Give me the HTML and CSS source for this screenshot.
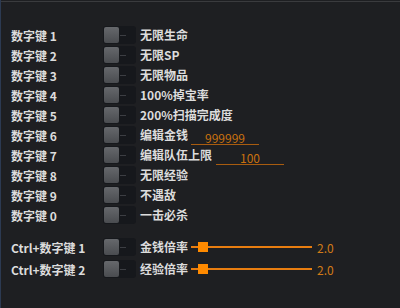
FILE: index.html
```html
<!DOCTYPE html>
<html lang="zh">
<head>
    <meta charset="UTF-8">
    <title>修改器</title>
    <link rel="stylesheet" href="styles.css">
</head>
<body>
    <div class="panel">
        <div class="row"><span class="key">数字键 1</span><span class="toggle"><i></i></span><span class="name">无限生命</span></div>
        <div class="row"><span class="key">数字键 2</span><span class="toggle"><i></i></span><span class="name">无限SP</span></div>
        <div class="row"><span class="key">数字键 3</span><span class="toggle"><i></i></span><span class="name">无限物品</span></div>
        <div class="row"><span class="key">数字键 4</span><span class="toggle"><i></i></span><span class="name">100%掉宝率</span></div>
        <div class="row"><span class="key">数字键 5</span><span class="toggle"><i></i></span><span class="name">200%扫描完成度</span></div>
        <div class="row"><span class="key">数字键 6</span><span class="toggle"><i></i></span><span class="name">编辑金钱</span><span class="field f-money">999999</span></div>
        <div class="row"><span class="key">数字键 7</span><span class="toggle"><i></i></span><span class="name">编辑队伍上限</span><span class="field f-party">100</span></div>
        <div class="row"><span class="key">数字键 8</span><span class="toggle"><i></i></span><span class="name">无限经验</span></div>
        <div class="row"><span class="key">数字键 9</span><span class="toggle"><i></i></span><span class="name">不遇敌</span></div>
        <div class="row"><span class="key">数字键 0</span><span class="toggle"><i></i></span><span class="name">一击必杀</span></div>

        <div class="group">
            <div class="row"><span class="key">Ctrl+数字键 1</span><span class="toggle"><i></i></span><span class="name">金钱倍率</span><span class="slider"><b></b></span><span class="value">2.0</span></div>
            <div class="row"><span class="key">Ctrl+数字键 2</span><span class="toggle"><i></i></span><span class="name">经验倍率</span><span class="slider"><b></b></span><span class="value">2.0</span></div>
        </div>
    </div>
</body>
</html>
```
FILE: styles.css
```css
html, body {
    margin: 0;
    padding: 0;
}
body {
    width: 400px;
    height: 308px;
    background-color: #1e1f22;
    border-left: 1px solid #2c3a52;
    box-sizing: border-box;
    font-family: "Noto Sans CJK SC", "Noto Sans", sans-serif;
    font-size: 12px;
    font-weight: bold;
    color: #dcdcdc;
    overflow: hidden;
}
.panel {
    border-top: 1px solid #3a3b3e;
    margin-top: 1px;
    padding: 23px 0 0 10px;
}
.row {
    display: flex;
    align-items: center;
    height: 20px;
}
.key {
    width: 92px;
}
.toggle {
    position: relative;
    width: 33px;
    height: 18px;
    background-color: #16181c;
    border-radius: 3px;
    margin-right: 4px;
}
.toggle i {
    position: absolute;
    left: 1px;
    top: 1px;
    width: 15px;
    height: 16px;
    border-radius: 2px;
    background: linear-gradient(#66686c, #4a4c50);
}
.toggle::after {
    content: "";
    position: absolute;
    left: 17px;
    top: 9px;
    width: 6px;
    height: 1px;
    background-color: #3c3e43;
}
.name {
    line-height: 20px;
}
.field {
    color: #c8710f;
    font-weight: normal;
    text-align: center;
    border-bottom: 1px solid #a85c10;
    line-height: 13px;
    width: 68px;
    margin-top: 5px;
}
.f-money {
    margin-left: 3px;
}
.f-party {
    margin-left: 4px;
}
.group {
    margin-top: 11px;
}
.group .row {
    height: 22px;
}
.slider {
    position: relative;
    width: 121px;
    height: 2px;
    margin-left: 3px;
    background-color: #e87d10;
}
.slider b {
    position: absolute;
    left: 7px;
    top: -4px;
    width: 10px;
    height: 10px;
    background-color: #ff8a00;
}
.value {
    margin-left: 5px;
    color: #d17a18;
    font-weight: normal;
}
```
